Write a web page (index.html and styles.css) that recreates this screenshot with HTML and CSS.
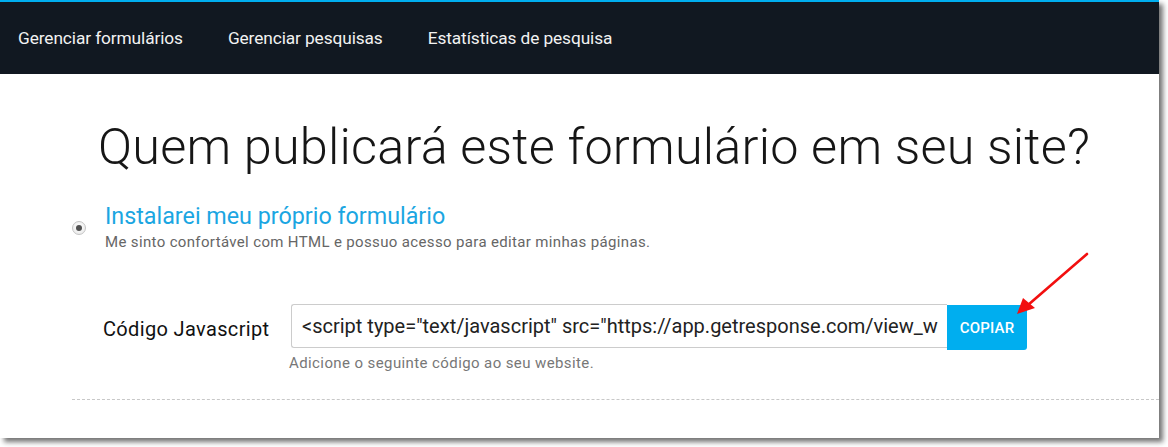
FILE: index.html
```html
<!DOCTYPE html>
<html lang="pt">
<head>
<meta charset="utf-8">
<link rel="stylesheet" href="styles.css">
</head>
<body>
<div class="frame">
  <nav class="nav">
    <a class="nav-item">Gerenciar formulários</a>
    <a class="nav-item">Gerenciar pesquisas</a>
    <a class="nav-item">Estatísticas de pesquisa</a>
  </nav>
  <main class="content">
    <h1 class="title">Quem publicará este formulário em seu site?</h1>
    <div class="option">
      <span class="radio"><span class="dot"></span></span>
      <div class="option-text">
        <div class="option-label">Instalarei meu próprio formulário</div>
        <div class="option-desc">Me sinto confortável com HTML e possuo acesso para editar minhas páginas.</div>
      </div>
    </div>
    <div class="code-row">
      <div class="code-label">Código Javascript</div>
      <div class="code-field">
        <div class="input-group">
          <div class="code-input">&lt;script type="text/javascript" src="https://app.getresponse.com/view_w</div>
          <button class="copy-btn">COPIAR</button>
        </div>
        <div class="hint">Adicione o seguinte código ao seu website.</div>
      </div>
    </div>
    <div class="divider"></div>
  </main>
  <svg class="arrow" width="90" height="80" viewBox="0 0 90 80">
    <line x1="79" y1="5" x2="20" y2="56" stroke="#f20f0f" stroke-width="2.6" stroke-linecap="round"/>
    <polygon points="9,65 15,49 27,59" fill="#f20f0f"/>
  </svg>
</div>
</body>
</html>
```
FILE: styles.css
```css
html, body {
  margin: 0;
  padding: 0;
  background: #ffffff;
}
body {
  width: 1168px;
  height: 447px;
  overflow: hidden;
  font-family: Roboto, "Liberation Sans", sans-serif;
}
.frame {
  position: relative;
  width: 1159px;
  height: 438px;
  background: #fff;
  box-shadow: 4px 4px 5px rgba(0, 0, 0, 0.55);
}
.nav {
  height: 74px;
  background: #111821;
  border-top: 2px solid #00aeef;
  display: flex;
  align-items: center;
  padding-left: 18px;
  gap: 45px;
  box-sizing: border-box;
}
.nav-item {
  color: #f2f2f2;
  font-size: 17.3px;
  letter-spacing: -0.1px;
}
.content {
  padding-top: 43px;
}
.title {
  margin: 0 0 0 98px;
  font-weight: 300;
  font-size: 50.4px;
  line-height: 60px;
  color: #161616;
  letter-spacing: 0.2px;
  white-space: nowrap;
}
.option {
  display: flex;
  align-items: flex-start;
  margin: 25px 0 0 72px;
}
.radio {
  width: 14px;
  height: 14px;
  border-radius: 50%;
  border: 1px solid #c4c4c4;
  background: radial-gradient(circle at 50% 40%, #ffffff, #e6e6e6);
  display: flex;
  align-items: center;
  justify-content: center;
  box-sizing: border-box;
  margin-top: 19px;
  flex-shrink: 0;
}
.dot {
  width: 6px;
  height: 6px;
  border-radius: 50%;
  background: #505050;
}
.option-text {
  margin-left: 19px;
}
.option-label {
  color: #1ba6e2;
  font-size: 23.3px;
  line-height: 28px;
}
.option-desc {
  margin-top: 2px;
  color: #666;
  font-size: 15px;
  line-height: 20px;
  letter-spacing: 0.35px;
}
.code-row {
  display: flex;
  margin: 52px 0 0 103px;
}
.code-label {
  width: 188px;
  font-size: 20px;
  line-height: 20px;
  padding-top: 15px;
  color: #111;
  letter-spacing: 0.35px;
}
.input-group {
  display: flex;
  align-items: flex-start;
}
.code-input {
  width: 656px;
  height: 44px;
  box-sizing: border-box;
  border: 1px solid #ccc;
  border-right: none;
  border-radius: 3px 0 0 3px;
  padding: 0 10px;
  font-size: 20px;
  line-height: 42px;
  color: #222;
  white-space: nowrap;
  overflow: hidden;
}
.copy-btn {
  width: 80px;
  height: 45px;
  margin-top: 1px;
  border: none;
  border-radius: 0 3px 3px 0;
  background: #00aeef;
  color: #fff;
  font-family: Roboto, "Liberation Sans", sans-serif;
  font-weight: 500;
  font-size: 15px;
  letter-spacing: 0.2px;
  padding: 0;
}
.hint {
  margin-top: 4px;
  margin-left: -2px;
  font-size: 15px;
  line-height: 18px;
  color: #777;
  letter-spacing: 0.4px;
}
.divider {
  margin: 27px 0 0 72px;
  border-top: 1px dashed #c8c8c8;
}
.arrow {
  position: absolute;
  left: 1008px;
  top: 249px;
}
```
